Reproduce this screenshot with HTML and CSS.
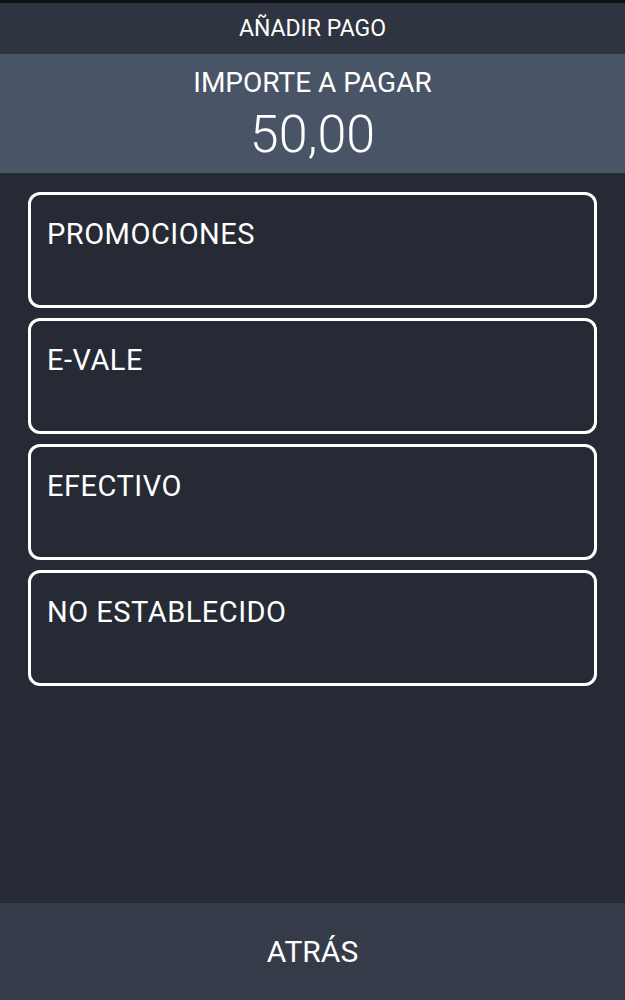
FILE: index.html
```html
<!DOCTYPE html>
<html lang="es">

<head>
    <meta charset="utf-8">
    <meta name="viewport" content="width=device-width, initial-scale=1.0">
    <title>Añadir pago</title>
    <link rel="stylesheet" href="styles.css">
</head>

<body>
    <div class="pantalla">
        <header class="cabecera">
            <h1>AÑADIR PAGO</h1>
        </header>

        <section class="importe">
            <p class="importe-titulo">IMPORTE A PAGAR</p>
            <p class="importe-valor">50,00</p>
        </section>

        <main class="metodos">
            <button class="metodo">PROMOCIONES</button>
            <button class="metodo">E-VALE</button>
            <button class="metodo">EFECTIVO</button>
            <button class="metodo">NO ESTABLECIDO</button>
        </main>

        <footer class="pie">
            <button class="atras">ATRÁS</button>
        </footer>
    </div>
</body>

</html>
```

FILE: styles.css
```css
html,
body {
    margin: 0;
    height: 100%;
}

body {
    font-family: Roboto, "Liberation Sans", sans-serif;
    background-color: #252a34;
    color: #ffffff;
}

.pantalla {
    display: flex;
    flex-direction: column;
    height: 100%;
    border-top: 3px solid #0e1014;
    box-sizing: border-box;
}

.cabecera {
    background-color: #2f3441;
    height: 51px;
    display: flex;
    align-items: center;
    justify-content: center;
}

.cabecera h1 {
    margin: 0;
    font-size: 23px;
    font-weight: 400;
}

.importe {
    background-color: #495467;
    height: 119px;
    text-align: center;
}

.importe p {
    margin: 0;
}

.importe-titulo {
    font-size: 28px;
    padding-top: 13px;
    line-height: 32px;
}

.importe-valor {
    font-size: 52px;
    font-weight: 300;
    line-height: 72px;
}

.metodos {
    flex: 1;
    display: flex;
    flex-direction: column;
    gap: 10px;
    padding: 19px 28px;
}

.metodo {
    height: 116px;
    flex-shrink: 0;
    border: 3px solid #ffffff;
    border-radius: 12px;
    background: transparent;
    color: #ffffff;
    font-family: Roboto, "Liberation Sans", sans-serif;
    font-size: 29px;
    letter-spacing: 0.5px;
    text-align: left;
    display: flex;
    align-items: flex-start;
    padding: 22px 16px;
}

.pie {
    background-color: #363b4a;
    height: 97px;
    display: flex;
}

.atras {
    flex: 1;
    border: none;
    background: transparent;
    color: #ffffff;
    font-family: Roboto, "Liberation Sans", sans-serif;
    font-size: 30px;
}
```
